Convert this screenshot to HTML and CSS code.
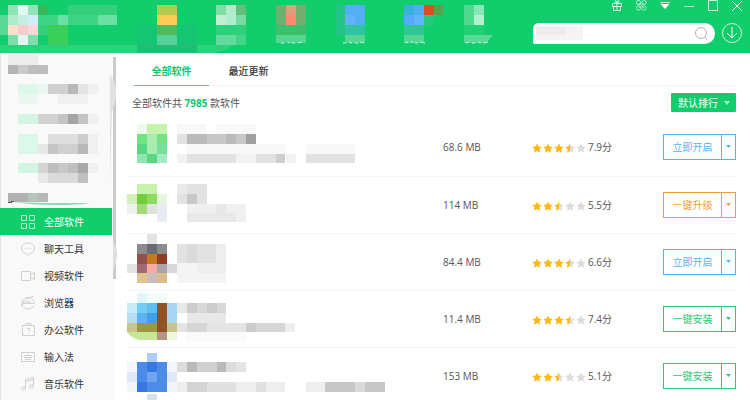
FILE: index.html
```html
<!DOCTYPE html>
<html lang="zh-CN">
<head>
  <meta charset="UTF-8" />
  <meta name="viewport" content="width=device-width, initial-scale=1" />
  <title>软件管家</title>
  <link rel="stylesheet" href="styles.css">
</head>
<body>
  <!-- shared shapes -->
  <svg class="defs" aria-hidden="true">
    <defs>
      <linearGradient id="half">
        <stop offset="0.55" stop-color="#fdb913" />
        <stop offset="0.55" stop-color="#dcdcdc" />
      </linearGradient>
      <path id="star" d="M5 0.4 6.5 3.5 9.8 3.9 7.4 6.3 8 9.7 5 8.1 2 9.7 2.6 6.3 0.2 3.9 3.5 3.5z" />
      <g id="stars-3">
        <use href="#star" fill="#fdb913" /><use href="#star" x="11" fill="#fdb913" /><use href="#star" x="22" fill="#fdb913" />
        <use href="#star" x="33" fill="url(#half)" /><use href="#star" x="44" fill="#dcdcdc" />
      </g>
      <g id="stars-2">
        <use href="#star" fill="#fdb913" /><use href="#star" x="11" fill="#fdb913" /><use href="#star" x="22" fill="url(#half)" />
        <use href="#star" x="33" fill="#dcdcdc" /><use href="#star" x="44" fill="#dcdcdc" />
      </g>
    </defs>
  </svg>

  <header class="header">
    <svg class="logo" width="137" height="53" shape-rendering="crispEdges">
      <path fill="#2fd07c" d="M0 45h137v8H0z" />
      <path fill="#3dd485" d="M0 15h117v10H0z" />
      <path fill="#35d07c" d="M68 5h49v10H68zM0 25h48v10H0z" />
      <path fill="#5ad898" d="M0 15h8v20H0z" />
      <path fill="#8fe5b8" d="M8 5h10v10H8zM28 5h10v10H28z" />
      <path fill="#e0f8f0" d="M18 5h10v10H18zM18 35h10v10H18z" />
      <path fill="#35b95a" d="M38 5h10v10H38z" />
      <path fill="#aeeccb" d="M8 15h10v10H8z" />
      <path fill="#c4f0e4" d="M18 15h10v10H18z" />
      <path fill="#d0eef8" d="M28 15h10v10H28z" />
      <path fill="#6ae0a4" d="M58 15h10v10H58zM98 15h19v10H98z" />
      <path fill="#fbe0cc" d="M8 25h10v10H8z" />
      <path fill="#f8cccc" d="M18 25h10v10H18z" />
      <path fill="#f8d8d8" d="M28 25h10v10H28z" />
      <path fill="#7ce0ac" d="M8 35h10v10H8zM28 35h10v10H28z" />
      <path fill="#3acf5a" d="M48 25h20v20H48z" />
    </svg>
    <nav class="topnav">
      <a href="#" aria-label="宝库">
        <svg width="60" height="53" shape-rendering="crispEdges">
          <path fill="#14c574" d="M0 25h60v28H0z" />
          <path fill="#25bb77" d="M0 45h60v8H0z" />
          <path fill="#b5c94f" d="M20 5h20v10H20z" />
          <path fill="#fbcb55" d="M20 15h20v10H20z" />
          <path fill="#4cbd5c" d="M20 25h20v10H20z" />
          <path fill="#54d29a" d="M20 35h20v10H20z" />
        </svg>
      </a>
      <a href="#" aria-label="游戏">
        <svg width="60" height="53" shape-rendering="crispEdges">
          <path fill="#2fd07c" d="M0 45h36l-6 5-14 3H0z" />
          <path fill="#80dda4" d="M19 5h10v10H19z" />
          <path fill="#aeeccb" d="M29 5h10v10H29z" />
          <path fill="#62c07c" d="M39 5h10v10H39z" />
          <path fill="#c0efd2" d="M19 15h10v10H19z" />
          <path fill="#b0ecce" d="M29 15h10v10H29z" />
          <path fill="#76dca2" d="M39 15h10v10H39z" />
          <path fill="#2fd07c" d="M19 25h30v10H19z" />
          <path fill="#62dc9c" d="M19 35h20v10H19z" />
          <path fill="#42d488" d="M39 35h10v10H39z" />
        </svg>
      </a>
      <a href="#" aria-label="商城">
        <svg width="60" height="53">
          <path fill="#74ad70" d="M19 5h10v20H19zM39 5h10v20H39z" />
          <path fill="#dea078" d="M29 5h10v10H29z" />
          <path fill="#fc8b74" d="M29 15h10v10H29z" />
          <path fill="#3dbf6b" d="M19 25h30v10H19z" />
          <path fill="#54d792" d="M19 35h30v8H19z" />
          <path class="specks" d="M24 43h3M31 42l2 1M35 43h3M41 43l4-1" />
        </svg>
      </a>
      <a href="#" aria-label="净化">
        <svg width="60" height="53">
          <path fill="#25c487" d="M19 5h9v30H19z" />
          <path fill="#54aef2" d="M28 5h20v10H28zM38 15h10v10H38z" />
          <path fill="#62b4fa" d="M28 15h10v10H28z" />
          <path fill="#30c3a0" d="M28 25h20v10H28z" />
          <path fill="#54d792" d="M28 35h20v8H28z" />
          <path class="specks" d="M26 43h3M32 42l3 1M38 43h3M43 42l4 1" />
        </svg>
      </a>
      <a href="#" aria-label="升级">
        <svg width="66" height="53">
          <path fill="#38b2d8" d="M27 5h10v10H27z" />
          <path fill="#50aef0" d="M37 5h10v10H37z" />
          <path fill="#56a9fb" d="M27 15h10v10H27z" />
          <path fill="#62b4fa" d="M37 15h10v10H37z" />
          <path fill="#e34a20" d="M47 5h10v10H47z" />
          <path fill="#5f9f4c" d="M57 5h9v10H57z" />
          <path fill="#25c87d" d="M47 15h10v10H47z" />
          <path fill="#2ec695" d="M27 25h20v10H27z" />
          <path fill="#54d792" d="M27 35h20v8H27z" />
          <path class="specks" d="M28 43l3-1M34 42h2M38 43h3M43 42l5 1" />
        </svg>
      </a>
      <a href="#" aria-label="卸载">
        <svg width="54" height="53">
          <path fill="#52d990" d="M21 5h10v20H21z" />
          <path fill="#86e7b2" d="M31 5h10v10H31z" />
          <path fill="#b0f2ce" d="M31 15h10v10H31z" />
          <path fill="#1fd075" d="M21 25h20v10H21z" />
          <path fill="#58da96" d="M21 35h29l-7 8H21z" />
          <path class="specks" d="M23 43l3-1M29 43h3M35 42l3 1M40 43l5-1" />
        </svg>
      </a>
    </nav>

    <div class="header-right">
      <div class="window-bar">
        <button class="icon-btn" aria-label="礼物">
          <svg width="12" height="12" fill="none" stroke="#d8f8e6"><path d="M1.5 3.5h9v3h-9zM2.5 6.5h7v4h-7zM6 3v8M6 3C4 3 3.500 1.500 4.200 0.800S6 1.500 6 3C6 1.500 7 0 7.800 0.800S8 3 6 3" /></svg>
        </button>
        <button class="icon-btn" aria-label="工具">
          <svg width="12" height="12" fill="none" stroke="#a8edc8"><rect x="1.500" y="0.500" width="4" height="4" rx="1.500" /><rect x="7" y="0.500" width="4" height="4" rx="1.500" /><rect x="1.500" y="6" width="4" height="4" rx="1.500" /><rect x="7" y="6" width="4" height="4" rx="1.500" /><path d="M4 3l5 5M9 3L4 8" /></svg>
        </button>
        <button class="icon-btn" aria-label="菜单">
          <svg width="12" height="12"><path fill="#b8f0d2" d="M1 2h10v1H1z" /><path fill="#fff" d="M1.500 4h9L6 9z" /></svg>
        </button>
        <button class="icon-btn" aria-label="最小化">
          <svg width="12" height="12"><path fill="#a8edc8" d="M1 6h10v1H1z" /></svg>
        </button>
        <button class="icon-btn" aria-label="最大化">
          <svg width="12" height="12"><path fill="none" stroke="#c8f4dc" d="M1.500 0.500h9v10h-9z" /></svg>
        </button>
        <button class="icon-btn" aria-label="关闭">
          <svg width="12" height="12"><path fill="none" stroke="#e4faee" d="M1 1l10 10M11 1L1 11" /></svg>
        </button>
      </div>
      <div class="search-row">
        <div class="search">
          <input type="search" aria-label="搜索软件">
          <svg class="search-hint" width="50" height="21"><path fill="#f5f3f4" d="M3 3h47v14H3z" /><path fill="#efeced" d="M3 3h30v9H3z" /></svg>
          <svg class="search-icon" width="16" height="16" fill="none" stroke="#b4b4b4"><circle cx="8" cy="7" r="5.500" /><path d="M12 11l2 3" /></svg>
        </div>
        <button class="icon-btn" aria-label="下载管理">
          <svg width="22" height="22" fill="none" stroke="#d0f6e0"><circle cx="11" cy="11" r="9.500" /><path d="M11 5v11M6 11l5 5 5-5" stroke="#fff" /></svg>
        </button>
      </div>
    </div>
  </header>

  <div class="main">
    <aside class="sidebar">
      <svg class="promo" width="112" height="155" shape-rendering="crispEdges">
        <path fill="#ececec" d="M8 2h30v10H8z" />
        <path fill="#b5b5b5" d="M8 12h10v9H8z" /><path fill="#cacaca" d="M18 12h10v9H18z" /><path fill="#bdbdbd" d="M28 12h20v9H28z" />
        <path fill="#dcf8ea" d="M18 31h20v10H18zM18 81h20v20H18z" />
        <path fill="#eaf7f0" d="M38 31h10v10H38zM18 41h20v10H18z" />
        <path fill="#d0d0d0" d="M48 31h20v10H48z" /><path fill="#b8b8b8" d="M68 31h10v10H68z" /><path fill="#e4e4e4" d="M78 31h10v10H78z" />
        <path fill="#f0f0f0" d="M88 31h10v10H88zM58 41h30v10H58zM88 61h10v10H88zM88 81h10v20H88zM88 110h10v10H88z" />
        <path fill="#d4f5e4" d="M18 61h20v10H18zM18 110h20v10H18z" />
        <path fill="#d2d2d2" d="M38 61h20v10H38z" /><path fill="#c4c4c4" d="M58 61h10v10H58zM78 61h10v10H78z" /><path fill="#a4a4a4" d="M68 61h10v10H68z" />
        <path fill="#dedede" d="M48 81h30v10H48z" /><path fill="#cccccc" d="M78 81h10v10H78z" />
        <path fill="#e8e8e8" d="M38 91h10v10H38zM38 120h10v10H38z" /><path fill="#c6c6c6" d="M48 91h10v10H48z" /><path fill="#d0d0d0" d="M58 91h20v10H58z" /><path fill="#b8b8b8" d="M78 91h10v10H78z" />
        <path fill="#d4d4d4" d="M38 110h10v10H38z" /><path fill="#bebebe" d="M48 110h10v10H48zM68 110h10v10H68z" /><path fill="#c8c8c8" d="M58 110h10v10H58z" /><path fill="#a8a8a8" d="M78 110h10v10H78z" />
        <path fill="#dadada" d="M48 120h30v10H48z" /><path fill="#c0c0c0" d="M78 120h10v10H78z" />
        <path fill="#b2b2b2" d="M8 140h20v9H8z" /><path fill="#b4c6bc" d="M28 140h10v9H28z" /><path fill="#b8b8b8" d="M38 140h10v9H38z" />
        <g shape-rendering="auto">
          <path fill="#8fd9b0" d="M15 149q20 1 45 1t30 0q-10 2-35 2t-40-3z" />
          <path fill="none" stroke="#555" d="M8 149.500h4M11 148.500h3" />
        </g>
      </svg>
      <nav class="cats">
        <a href="#" class="active">
          <svg width="16" height="16" fill="none" stroke="#b4f2d0"><path d="M1.500 1.500h5v5h-5zM9.500 1.500h5v5h-5zM1.500 9.500h5v5h-5zM9.500 9.500h5v5h-5z" /></svg>全部软件</a>
        <a href="#">
          <svg width="16" height="16"><path d="M8 2C4 2 1.500 4.300 1.500 7.200S4 12.300 6 12.500L8 14.500 9.500 12.500C12 12.300 14.500 10 14.500 7.200S12 2 8 2zM5.500 7v1M8 7v1M10.500 7v1" /></svg>聊天工具</a>
        <a href="#">
          <svg width="16" height="16"><path d="M1.500 3.500h9v9h-9zM10.500 7l4-2.500v7L10.500 9" /></svg>视频软件</a>
        <a href="#">
          <svg width="16" height="16"><path d="M2 8.500h12C14 5 11.500 2.500 8 2.500S2 5 2 8.500 5 14 8 14c2.500 0 4.500-1 5.500-3M1.500 11C3 6 9 2 14 1.500M5 8.500C5 6 11 6 11 8.500" /></svg>浏览器</a>
        <a href="#">
          <svg width="16" height="16"><path d="M2.500 3.500h12v10h-12zM6 3.500v-2h5v2M7 6.500h2.500v3" /></svg>办公软件</a>
        <a href="#">
          <svg width="16" height="16"><path d="M1.500 3.500h13v9h-13zM4 6.500h8M4 8.500h8M5 10.500h6" /></svg>输入法</a>
        <a href="#">
          <svg width="16" height="16"><path d="M5.500 12V3.500l8-2V10M5.500 5.500l8-2" /><ellipse cx="3.500" cy="12.500" rx="2" ry="1.500" /><ellipse cx="11.500" cy="10.500" rx="2" ry="1.500" /></svg>音乐软件</a>
      </nav>
      <svg class="scroll-thumb" width="10" height="230">
        <path fill="#cbcbcb" d="M4 4h3v222H4z" />
        <path fill="#e2e2e2" d="M1 22c4 4 6 12 6 18s-2 14-4 18l-2 70z" />
        <path fill="#dedede" d="M4 188q5 8 4 16t-4 14z" />
      </svg>
    </aside>

    <main class="content">
      <div class="tabs">
        <a href="#" class="active">全部软件</a>
        <a href="#">最近更新</a>
      </div>
      <div class="toolbar">
        <p>全部软件共 <strong>7985</strong> 款软件</p>
        <div class="sort">
          <select aria-label="排序">
            <option>默认排行</option>
          </select>
          <svg width="8" height="5"><path fill="#c4f4da" d="M1 0h6L4 4z" /></svg>
        </div>
      </div>

      <table class="apps">
        <tr>
          <td>
            <svg width="270" height="56" shape-rendering="crispEdges">
              <path fill="#eefaf0" d="M10 5h10v10H10z" /><path fill="#c6f4ac" d="M20 5h20v10H20z" />
              <path fill="#72e282" d="M10 15h10v10H10zM30 15h10v10H30z" /><path fill="#a8edb0" d="M20 15h10v20H20z" />
              <path fill="#58d884" d="M10 25h10v10H10zM20 35h10v9H20z" /><path fill="#74e09c" d="M30 25h10v10H30z" />
              <path fill="#8ee6ae" d="M10 35h10v9H10z" /><path fill="#a4ebc2" d="M30 35h10v9H30z" />
              <path fill="#f8f8f8" d="M50 5h29v10H50zM89 5h40v10H89zM60 25h99v10H60zM179 25h49v10H179z" />
              <path fill="#e2e2e2" d="M50 15h10v10H50z" /><path fill="#bababa" d="M60 15h20v10H60zM99 15h10v10H99z" /><path fill="#c8c8c8" d="M80 15h19v10H80zM109 15h10v10H109z" /><path fill="#a0a0a0" d="M119 15h10v10H119z" />
              <path fill="#f2f2f2" d="M50 35h10v9H50zM109 35h20v9H109zM159 35h10v9H159z" /><path fill="#e2e2e2" d="M60 35h49v9H60zM129 35h20v9H129zM179 35h49v9H179z" /><path fill="#cecece" d="M149 35h9v9H149z" />
            </svg>
          </td>
          <td class="size">68.6 MB</td>
          <td class="score"><svg width="54" height="10"><use href="#stars-3" /></svg>7.9分</td>
          <td class="action">
            <div class="split blue"><button>立即开启</button><button class="more" aria-label="更多"><svg width="7" height="4"><path d="M1 0h5L3.500 3z" /></svg></button></div>
          </td>
        </tr>
        <tr>
          <td>
            <svg width="270" height="56" shape-rendering="crispEdges">
              <path fill="#c6f2ac" d="M10 7h20v10H10z" /><path fill="#d2f2ba" d="M0 17h10v10H0z" />
              <path fill="#74ce3c" d="M10 17h10v10H10z" /><path fill="#8cda5e" d="M20 17h10v10H20z" /><path fill="#e4f6dc" d="M30 17h10v10H30z" />
              <path fill="#f0f0ec" d="M0 27h10v10H0z" /><path fill="#a2da78" d="M10 27h10v10H10z" /><path fill="#dfe3dd" d="M20 27h10v10H20z" /><path fill="#e8ecf2" d="M30 27h10v18H30z" />
              <path fill="#eaeaea" d="M50 7h10v10H50z" /><path fill="#e2e2e2" d="M60 7h20v10H60zM50 17h10v10H50zM70 17h10v10H70z" /><path fill="#c8c8c8" d="M60 17h10v10H60z" />
              <path fill="#f0f0f0" d="M60 27h59v18H60z" /><path fill="#e8e8e8" d="M60 36h49v9H60zM89 27h10v9H89z" />
            </svg>
          </td>
          <td class="size">114 MB</td>
          <td class="score"><svg width="54" height="10"><use href="#stars-2" /></svg>5.5分</td>
          <td class="action">
            <div class="split orange"><button>一键升级</button><button class="more" aria-label="更多"><svg width="7" height="4"><path d="M1 0h5L3.500 3z" /></svg></button></div>
          </td>
        </tr>
        <tr>
          <td>
            <svg width="270" height="56" shape-rendering="crispEdges">
              <path fill="#e4e4e4" d="M20 0h10v10H20zM0 30h10v9H0z" /><path fill="#8c8c8e" d="M10 10h10v10H10zM30 10h10v10H30z" /><path fill="#6c6c74" d="M20 10h10v10H20z" />
              <path fill="#94504c" d="M10 20h10v10H10z" /><path fill="#c47a20" d="M20 20h10v10H20z" /><path fill="#943c22" d="M30 20h10v10H30z" />
              <path fill="#a06a6e" d="M10 30h10v9H10z" /><path fill="#f6aca4" d="M20 30h10v9H20z" /><path fill="#a8a4a8" d="M30 30h10v9H30z" /><path fill="#d8d8dc" d="M40 30h10v9H40z" />
              <path fill="#e0c490" d="M10 39h10v10H10z" /><path fill="#c8bcbc" d="M20 39h10v10H20z" /><path fill="#d8be8c" d="M30 39h10v10H30z" />
              <path fill="#eeeeee" d="M50 10h49v29H50z" /><path fill="#e2e2e2" d="M50 10h39v19H50z" /><path fill="#dadada" d="M60 10h10v19H60z" /><path fill="#f4f4f4" d="M50 29h20v10H50zM50 39h49v10H50z" />
            </svg>
          </td>
          <td class="size">84.4 MB</td>
          <td class="score"><svg width="54" height="10"><use href="#stars-3" /></svg>6.6分</td>
          <td class="action">
            <div class="split blue"><button>立即开启</button><button class="more" aria-label="更多"><svg width="7" height="4"><path d="M1 0h5L3.500 3z" /></svg></button></div>
          </td>
        </tr>
        <tr>
          <td>
            <svg width="270" height="56" shape-rendering="crispEdges">
              <path fill="#e0f6fc" d="M10 2h10v10H10z" /><path fill="#f2fafa" d="M20 2h20v10H20z" />
              <path fill="#c6ecf8" d="M0 12h10v10H0z" /><path fill="#74ccf2" d="M10 12h10v10H10z" /><path fill="#62bcec" d="M20 12h10v10H20z" /><path fill="#8e5426" d="M30 12h10v30H30z" /><path fill="#a6d6f4" d="M40 12h10v20H40z" />
              <path fill="#b8dcf4" d="M0 22h10v10H0z" /><path fill="#58b4f0" d="M10 22h10v10H10z" /><path fill="#469ee2" d="M20 22h10v10H20z" />
              <path fill="#c8c48c" d="M0 32h10v9H0zM40 32h10v9H40z" /><path fill="#9c9840" d="M10 32h20v9H10z" />
              <path fill="#c8e698" d="M0 41h30v8H12q-8-2-12-8z" shape-rendering="auto" /><path fill="#b89486" d="M30 41h10v8H30z" /><path fill="#ecf8e0" d="M40 41h10v8H40z" />
              <path fill="#e8e8e8" d="M50 12h10v10H50zM60 22h39v10H60z" /><path fill="#cccccc" d="M60 12h10v10H60zM80 12h10v10H80z" /><path fill="#d8d8d8" d="M70 12h10v10H70zM90 12h9v10H90z" />
              <path fill="#e4e4e4" d="M50 32h10v9H50zM80 32h39v9H80z" /><path fill="#d6d6d6" d="M60 32h20v9H60zM129 32h29v9H129z" /><path fill="#cccccc" d="M119 32h10v9H119z" /><path fill="#eeeeee" d="M158 32h10v9H158z" /><path fill="#fafafa" d="M60 41h58v10H60z" />
            </svg>
          </td>
          <td class="size">11.4 MB</td>
          <td class="score"><svg width="54" height="10"><use href="#stars-3" /></svg>7.4分</td>
          <td class="action">
            <div class="split green"><button>一键安装</button><button class="more" aria-label="更多"><svg width="7" height="4"><path d="M1 0h5L3.500 3z" /></svg></button></div>
          </td>
        </tr>
        <tr>
          <td>
            <svg width="270" height="56" shape-rendering="crispEdges">
              <path fill="#f2f6fc" d="M0 14h50v30H0z" /><path fill="#dfe9f6" d="M0 24h10v10H0zM40 24h10v10H40z" />
              <path fill="#aeccf6" d="M20 5h10v9H20z" /><path fill="#4c8ce8" d="M10 14h30v30H10z" /><path fill="#3678e0" d="M20 14h10v10H20zM10 34h10v10H10z" /><path fill="#70a4ee" d="M20 24h10v10H20z" /><path fill="#d4e2ee" d="M20 46h10v7H20z" />
              <path fill="#dcdcdc" d="M50 14h10v10H50zM99 14h10v10H99z" /><path fill="#bababa" d="M60 14h10v10H60zM90 14h9v10H90z" /><path fill="#d0d0d0" d="M70 14h20v10H70z" /><path fill="#e4e4e4" d="M109 14h10v10H109z" />
              <path fill="#eeeeee" d="M50 34h10v10H50zM109 34h49v10H109zM179 34h19v10H179z" /><path fill="#d4d4d4" d="M60 34h20v10H60z" /><path fill="#e0e0e0" d="M80 34h29v10H80zM129 34h10v10H129z" /><path fill="#c8c8c8" d="M198 34h30v10H198zM238 34h20v10H238z" /><path fill="#dadada" d="M228 34h10v10H228z" />
            </svg>
          </td>
          <td class="size">153 MB</td>
          <td class="score"><svg width="54" height="10"><use href="#stars-2" /></svg>5.1分</td>
          <td class="action">
            <div class="split green"><button>一键安装</button><button class="more" aria-label="更多"><svg width="7" height="4"><path d="M1 0h5L3.500 3z" /></svg></button></div>
          </td>
        </tr>
      </table>
    </main>
  </div>
</body>
</html>
```

FILE: styles.css
```css
* {
  box-sizing: border-box;
}

body {
  margin: 0;
  height: 100vh;
  display: flex;
  flex-direction: column;
  overflow: hidden;
  background-color: #fff;
  color: #555;
  font-family: "Open Sans", "Noto Sans CJK SC", sans-serif;
  font-size: 10px;
  line-height: 16px;
}

svg {
  display: block;
  flex: none;
}

a {
  color: inherit;
  text-decoration: none;
}

button,
select,
input {
  font: inherit;
  color: inherit;
  margin: 0;
  padding: 0;
  border: 0;
  background: none;
}

button {
  cursor: pointer;
}

.defs {
  position: absolute;
  width: 0;
  height: 0;
}

/* header */
.header {
  display: flex;
  flex: none;
  height: 53px;
  background-color: #12cd6c;
  border-bottom: 1px solid #12c466;
}

.topnav {
  display: flex;
}

.specks {
  fill: none;
  stroke: #c4f4da;
}

.header-right {
  flex: 1;
  padding-right: 7px;
}

.window-bar {
  display: flex;
  justify-content: flex-end;
  gap: 12px;
}

.search-row {
  display: flex;
  align-items: center;
  justify-content: flex-end;
  gap: 6px;
  margin-top: 10px;
}

.search {
  position: relative;
  width: 182px;
  height: 21px;
}

.search input {
  width: 100%;
  height: 100%;
  padding: 0 28px 0 10px;
  background-color: #fff;
  border-radius: 6px 11px 11px 2px;
  appearance: none;
  outline: none;
}

.search-hint {
  position: absolute;
  left: 0;
  top: 0;
  pointer-events: none;
}

.search-icon {
  position: absolute;
  right: 6px;
  top: 3px;
}

.header-right .search-row .icon-btn {
  margin-right: 0;
}

/* sidebar */
.main {
  display: flex;
  flex: 1;
  min-height: 0;
}

.sidebar {
  position: relative;
  flex: none;
  width: 115px;
  padding-right: 3px;
  background-color: #f9f9f9;
  border-left: 1px solid #e4e4e4;
}

.promo {
  margin-left: -1px;
}

.cats a {
  display: flex;
  align-items: center;
  gap: 8px;
  height: 27px;
  margin-left: -1px;
  padding-left: 20px;
  color: #333;
}

.cats svg {
  fill: none;
  stroke: #cfcfcf;
}

.cats .active {
  background-color: #12cd6c;
  color: #fff;
}

.cats .active svg {
  stroke: #b4f2d0;
}

.scroll-thumb {
  position: absolute;
  top: 0;
  right: -4px;
}

/* list */
.content {
  flex: 1;
  min-width: 0;
  padding: 0 14px 0 12px;
}

.tabs {
  display: flex;
  gap: 2px;
  height: 33px;
  padding-left: 7px;
  border-bottom: 1px solid #f5f5f5;
}

.tabs a {
  width: 75px;
  height: 33px;
  padding-top: 10px;
  text-align: center;
  color: #333;
  font-weight: 500;
}

.tabs .active {
  color: #12c76a;
  font-weight: 700;
  border-bottom: 1px solid #4cd093;
}

.toolbar {
  display: flex;
  align-items: center;
  justify-content: space-between;
  height: 33px;
  padding-left: 5px;
}

.toolbar p {
  margin: 0;
}

.toolbar strong {
  color: #12c76a;
}

.sort {
  position: relative;
}

.sort select {
  display: block;
  width: 65px;
  height: 19px;
  padding-left: 7px;
  background-color: #12cd6c;
  border-radius: 1px;
  color: #fff;
  appearance: none;
}

.sort svg {
  position: absolute;
  right: 5px;
  top: 8px;
  pointer-events: none;
}

.apps {
  width: 100%;
  border-collapse: collapse;
  table-layout: fixed;
}

.apps td {
  height: 57px;
  padding: 0;
  border-bottom: 1px solid #f5f5f5;
}

.apps .size {
  width: 89px;
}

.apps .score {
  width: 131px;
}

.score svg {
  display: inline-block;
  margin-right: 2px;
  vertical-align: -2px;
}

.apps .action {
  width: 73px;
}

.split {
  display: flex;
  height: 26px;
  border: 1px solid currentColor;
}

.split button {
  flex: 1;
}

.split .more {
  display: flex;
  flex: none;
  align-items: center;
  justify-content: center;
  width: 14px;
  border-left: 1px solid currentColor;
}

.split svg {
  fill: currentColor;
}

.blue {
  color: #5ab4ea;
}

.orange {
  color: #f29a3e;
}

.green {
  color: #2cc974;
}
```
